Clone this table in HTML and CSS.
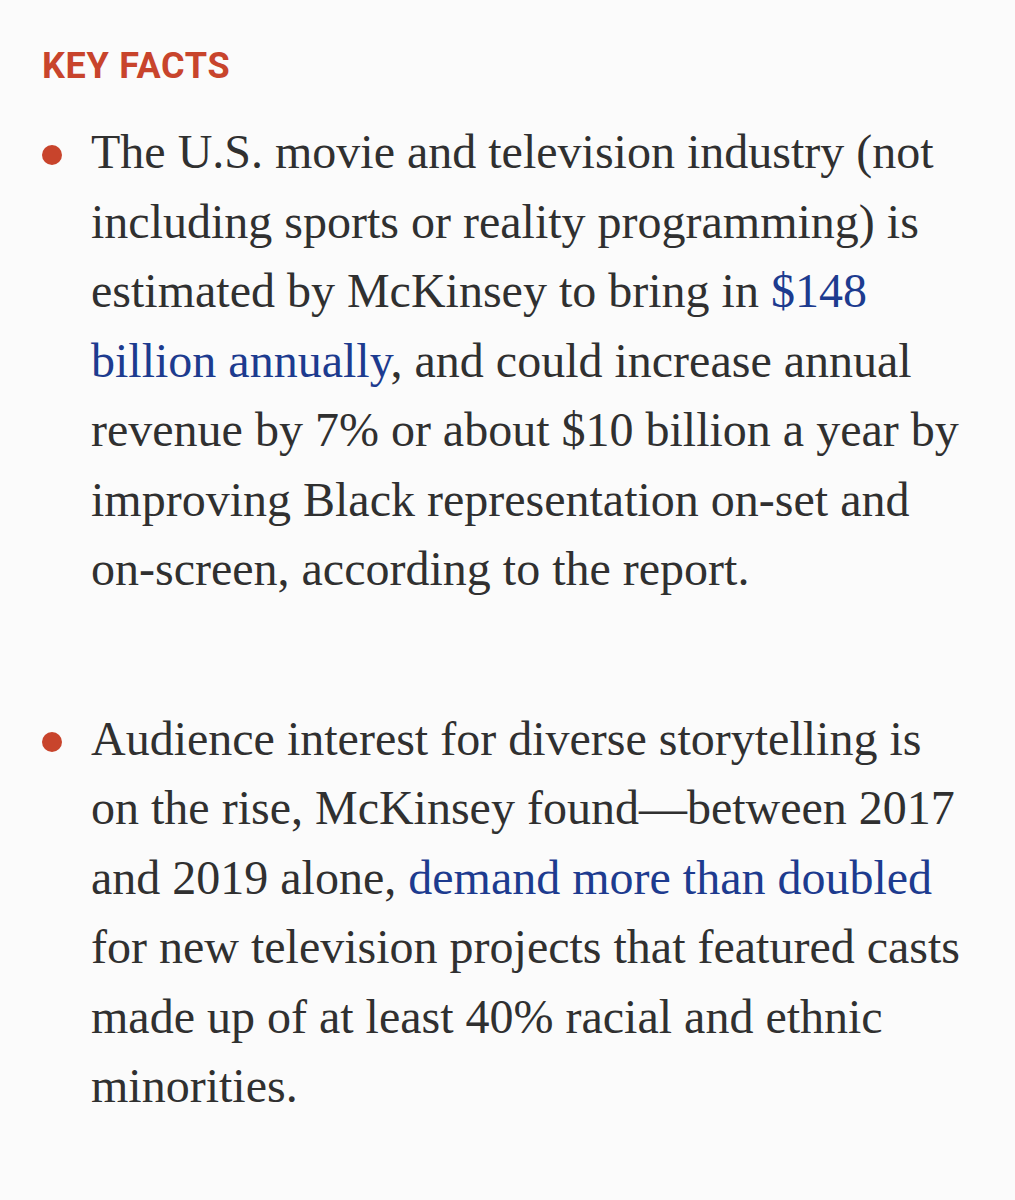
FILE: index.html
```html
<!DOCTYPE html>
<html lang="en">
<head>
<meta charset="utf-8">
<title>Key Facts</title>
<link rel="stylesheet" href="styles.css">
</head>
<body>
<section class="key-facts">
  <h2 class="kf-title">KEY FACTS</h2>
  <ul class="kf-list">
    <li class="kf-item">
      <span class="kf-dot"></span>
      <p class="kf-text">The U.S. movie and television industry (not<br>including sports or reality programming) is<br>estimated by McKinsey to bring in <a href="#">$148<br>billion annually</a>, and could increase annual<br>revenue by 7% or about $10 billion a year by<br>improving Black representation on-set and<br>on-screen, according to the report.</p>
    </li>
    <li class="kf-item">
      <span class="kf-dot"></span>
      <p class="kf-text">Audience interest for diverse storytelling is<br>on the rise, McKinsey found—between 2017<br>and 2019 alone, <a href="#">demand more than doubled</a><br>for new television projects that featured casts<br>made up of at least 40% racial and ethnic<br>minorities.</p>
    </li>
  </ul>
</section>
</body>
</html>
```
FILE: styles.css
```css
html, body {
  margin: 0;
  padding: 0;
  background: #fbfbfb;
}

.key-facts {
  padding: 48px 0 0 42px;
}

.kf-title {
  margin: 0;
  font-family: Roboto, "Liberation Sans", sans-serif;
  font-weight: 700;
  font-size: 36px;
  line-height: 36px;
  color: #c8442c;
  letter-spacing: 0.7px;
}

.kf-list {
  list-style: none;
  margin: 33px 0 0 0;
  padding: 0;
  display: flex;
  flex-direction: column;
  gap: 100px;
}

.kf-item {
  display: flex;
  align-items: flex-start;
}

.kf-dot {
  flex: 0 0 20px;
  width: 20px;
  height: 20px;
  border-radius: 50%;
  background: #c8442c;
  margin-top: 28px;
  margin-right: 29px;
}

.kf-text {
  margin: 0;
  font-family: "Liberation Serif", "Times New Roman", serif;
  font-size: 48px;
  line-height: 69.5px;
  color: #303030;
  white-space: nowrap;
}

.kf-text a {
  color: #1d3b8f;
  text-decoration: none;
}
```
